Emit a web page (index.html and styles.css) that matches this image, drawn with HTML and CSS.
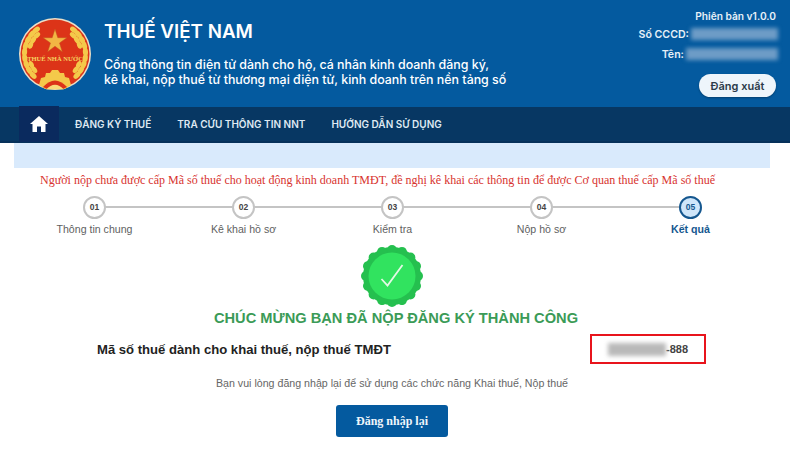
FILE: index.html
```html
<!DOCTYPE html>
<html lang="vi">
<head>
    <meta charset="UTF-8">
    <meta name="viewport" content="width=device-width, initial-scale=1.0">
    <title>Thuế Việt Nam</title>
    <link rel="stylesheet" href="styles.css">
</head>
<body>
    <!-- Header -->
    <header class="header">
        <svg class="emblem" width="72" height="72" viewBox="0 0 72 72">
            <circle cx="36" cy="36" r="36" fill="#eadfc8"/>
            <circle cx="36" cy="36" r="34.500" fill="#dc3418"/>
            <g id="wreath" fill="#f4c94a">
                <ellipse cx="36" cy="5.500" rx="4.200" ry="2.600" transform="rotate(38 36 36)"/>
                <ellipse cx="36" cy="5.500" rx="4.200" ry="2.600" transform="rotate(50 36 36)"/>
                <ellipse cx="36" cy="5.500" rx="4.200" ry="2.600" transform="rotate(62 36 36)"/>
                <ellipse cx="36" cy="5.500" rx="4.200" ry="2.600" transform="rotate(74 36 36)"/>
                <ellipse cx="36" cy="5.500" rx="4.200" ry="2.600" transform="rotate(86 36 36)"/>
                <ellipse cx="36" cy="5.500" rx="4.200" ry="2.600" transform="rotate(98 36 36)"/>
                <ellipse cx="36" cy="5.500" rx="4.200" ry="2.600" transform="rotate(110 36 36)"/>
                <ellipse cx="36" cy="5.500" rx="4.200" ry="2.600" transform="rotate(122 36 36)"/>
                <ellipse cx="36" cy="5.500" rx="4.200" ry="2.600" transform="rotate(134 36 36)"/>
                <ellipse cx="36" cy="10" rx="3.800" ry="2.400" transform="rotate(44 36 36)"/>
                <ellipse cx="36" cy="10" rx="3.800" ry="2.400" transform="rotate(57 36 36)"/>
                <ellipse cx="36" cy="10" rx="3.800" ry="2.400" transform="rotate(70 36 36)"/>
                <ellipse cx="36" cy="10" rx="3.800" ry="2.400" transform="rotate(114 36 36)"/>
                <ellipse cx="36" cy="10" rx="3.800" ry="2.400" transform="rotate(127 36 36)"/>
            </g>
            <use href="#wreath" transform="translate(72 0) scale(-1 1)"/>
            <path d="M20 67 L22 60 L26 59 L27 55 L31 55 L33 52 H39 L41 55 L45 55 L46 59 L50 60 L52 67 L46 71 H26 Z" fill="#f4c94a"/>
            <path d="M24 69 Q36 56 48 69 L44 71 H28 Z" fill="#dc3418"/>
            <path d="M27 71.500 Q36 62 45 71.500 Z" fill="#f9dc7a"/>
            <polygon points="36,11 38.800,19.700 47.900,19.700 40.500,25 43.300,33.700 36,28.300 28.700,33.700 31.500,25 24.100,19.700 33.200,19.700" fill="#f2b644" stroke="#c2501e" stroke-width=".5"/>
            <text x="36" y="42.500" class="emblem-text" text-anchor="middle">THUẾ NHÀ NƯỚC</text>
        </svg>
        <div class="brand">
            <h1>THUẾ VIỆT NAM</h1>
            <p>Cổng thông tin điện tử dành cho hộ, cá nhân kinh doanh đăng ký,<br>kê khai, nộp thuế từ thương mại điện tử, kinh doanh trên nền tảng số</p>
        </div>
        <div class="account">
            <div class="version">Phiên bản v1.0.0</div>
            <div class="account-row">Số CCCD: <span class="blur-light cccd"></span></div>
            <div class="account-row">Tên: <span class="blur-light name"></span></div>
            <button type="button" class="logout">Đăng xuất</button>
        </div>
    </header>

    <!-- Menu -->
    <nav class="nav">
        <a class="nav-home" href="#">
            <svg width="18" height="16" viewBox="0 0 18 16"><path d="M9 0 L18 8 L15.5 8 L15.5 16 L11 16 L11 10.5 L7 10.5 L7 16 L2.5 16 L2.5 8 L0 8 Z" fill="#fff"/></svg>
        </a>
        <a href="#">ĐĂNG KÝ THUẾ</a>
        <a href="#">TRA CỨU THÔNG TIN NNT</a>
        <a href="#">HƯỚNG DẪN SỬ DỤNG</a>
    </nav>

    <main class="panel">
        <div class="panel-band"></div>
        <p class="notice">Người nộp chưa được cấp Mã số thuế cho hoạt động kinh doanh TMĐT, đề nghị kê khai các thông tin để được Cơ quan thuế cấp Mã số thuế</p>

        <ol class="steps">
            <li class="step"><span class="step-num">01</span>Thông tin chung</li>
            <li class="step"><span class="step-num">02</span>Kê khai hồ sơ</li>
            <li class="step"><span class="step-num">03</span>Kiểm tra</li>
            <li class="step"><span class="step-num">04</span>Nộp hồ sơ</li>
            <li class="step active"><span class="step-num">05</span>Kết quả</li>
        </ol>

        <svg class="seal" width="64" height="64" viewBox="0 0 64 64">
            <g fill="#25c04f">
                <circle cx="32" cy="32" r="29"/>
                <circle cx="32" cy="6" r="5"/>
                <circle cx="32" cy="6" r="5" transform="rotate(22.5 32 32)"/>
                <circle cx="32" cy="6" r="5" transform="rotate(45 32 32)"/>
                <circle cx="32" cy="6" r="5" transform="rotate(67.5 32 32)"/>
                <circle cx="32" cy="6" r="5" transform="rotate(90 32 32)"/>
                <circle cx="32" cy="6" r="5" transform="rotate(112.5 32 32)"/>
                <circle cx="32" cy="6" r="5" transform="rotate(135 32 32)"/>
                <circle cx="32" cy="6" r="5" transform="rotate(157.5 32 32)"/>
                <circle cx="32" cy="6" r="5" transform="rotate(180 32 32)"/>
                <circle cx="32" cy="6" r="5" transform="rotate(202.5 32 32)"/>
                <circle cx="32" cy="6" r="5" transform="rotate(225 32 32)"/>
                <circle cx="32" cy="6" r="5" transform="rotate(247.5 32 32)"/>
                <circle cx="32" cy="6" r="5" transform="rotate(270 32 32)"/>
                <circle cx="32" cy="6" r="5" transform="rotate(292.5 32 32)"/>
                <circle cx="32" cy="6" r="5" transform="rotate(315 32 32)"/>
                <circle cx="32" cy="6" r="5" transform="rotate(337.5 32 32)"/>
            </g>
            <circle cx="32" cy="32" r="23.500" fill="#31e35f"/>
            <path d="M21.500 35 L27.500 41.500 L42.500 21" fill="none" stroke="#e4f8e6" stroke-width="1.800"/>
        </svg>

        <h2 class="success">CHÚC MỪNG BẠN ĐÃ NỘP ĐĂNG KÝ THÀNH CÔNG</h2>

        <div class="tax-row">
            <strong>Mã số thuế dành cho khai thuế, nộp thuế TMĐT</strong>
            <div class="tax-box"><span class="blur-grey"></span>-888</div>
        </div>

        <p class="hint">Bạn vui lòng đăng nhập lại để sử dụng các chức năng Khai thuế, Nộp thuế</p>
        <button type="button" class="relogin">Đăng nhập lại</button>
    </main>
</body>
</html>
```

FILE: styles.css
```css
* { box-sizing: border-box; }
html, body { height: 100%; }
body {
    margin: 0;
    background: #fff;
    font-family: Inter, "Noto Sans", sans-serif;
    overflow: hidden;
}

/* Header */
.header {
    height: 107px;
    background: #045a9f;
    color: #fff;
    display: flex;
    padding: 18px 14px 0 19px;
}
.emblem { flex: none; margin-right: 13px; }
.emblem-text {
    font-family: "Liberation Serif", serif;
    font-size: 6.5px;
    font-weight: 700;
    fill: #f6d560;
}
.brand { flex: 1; }
.brand h1 {
    margin: 1px 0 12px;
    font-size: 18.8px;
    line-height: 26px;
    font-weight: 600;
}
.brand p {
    margin: 0;
    font-size: 12.4px;
    line-height: 15px;
    font-weight: 500;
}
.account {
    display: flex;
    flex-direction: column;
    align-items: flex-end;
    margin-top: -10px;
    font-size: 10.2px;
    font-weight: 600;
    color: #e6f0f8;
}
.version { line-height: 14px; margin-top: 1px; white-space: nowrap; }
.account-row {
    display: flex;
    align-items: center;
    gap: 2px;
    height: 20px;
    margin-top: 1px;
    margin-right: -2px;
    font-size: 10.6px;
    white-space: nowrap;
}
.account-row + .account-row { margin-top: 0; }
.blur-light {
    display: block;
    height: 12px;
    background: #6d9cc6;
    filter: blur(2px);
}
.cccd { width: 87px; }
.name { width: 92px; }
.logout {
    width: 77px;
    height: 23px;
    margin-top: 10px;
    border: none;
    border-radius: 12px;
    background: #eef5fb;
    color: #2b3a4a;
    font-family: inherit;
    font-size: 11px;
    font-weight: 600;
    box-shadow: 0 1px 2px rgba(0, 0, 0, 0.3);
}

/* Menu */
.nav {
    height: 36px;
    background: #073763;
    border-bottom: 2px solid #06315a;
    display: flex;
    align-items: center;
    padding-left: 19px;
    gap: 26px;
}
.nav a {
    color: #dfe9f2;
    text-decoration: none;
    font-size: 10px;
    font-weight: 600;
}
.nav-home {
    width: 40px;
    height: 36px;
    margin-right: -10px;
    background: #0a2a5e;
    display: flex;
    align-items: center;
    justify-content: center;
}

/* Panel */
.panel {
    margin: 0 20px 0 14px;
    display: flex;
    flex-direction: column;
    align-items: center;
    background: #fff;
}
.panel-band {
    align-self: stretch;
    height: 25px;
    background: #d9eafc;
}
.notice {
    align-self: flex-start;
    margin: 4px 0 0 26px;
    font-family: "Liberation Serif", serif;
    font-size: 12.03px;
    line-height: 16px;
    color: #d8332e;
    white-space: nowrap;
}

/* Steps */
.steps {
    list-style: none;
    margin: 8px 0 0;
    padding: 0;
    align-self: flex-start;
    margin-left: 6px;
    display: grid;
    grid-template-columns: repeat(5, 149px);
}
.step {
    position: relative;
    display: flex;
    flex-direction: column;
    align-items: center;
    font-family: "Liberation Sans", sans-serif;
    font-size: 10.6px;
    line-height: 14px;
    color: #5f5f5f;
}
.step::after {
    content: "";
    position: absolute;
    top: 10px;
    left: 50%;
    width: 149px;
    height: 2px;
    background: #c4c4c4;
}
.step:last-child::after { display: none; }
.step-num {
    position: relative;
    z-index: 1;
    width: 23px;
    height: 23px;
    margin-bottom: 3px;
    border: 2px solid #c4c4c4;
    border-radius: 50%;
    background: #fff;
    color: #444;
    font-size: 8.5px;
    font-weight: 700;
    line-height: 19px;
    text-align: center;
}
.step.active { color: #15578f; font-weight: 700; }
.step.active .step-num {
    border-color: #15578f;
    background: #cfe6fa;
    color: #15578f;
}

/* Result */
.seal { margin: 8px 0 0; }
.success {
    margin: 1px 0 0 8px;
    font-family: "Liberation Sans", sans-serif;
    font-size: 14.65px;
    line-height: 18px;
    font-weight: 700;
    color: #3b9b57;
}
.tax-row {
    align-self: stretch;
    display: flex;
    align-items: center;
    justify-content: space-between;
    margin-top: 7px;
    padding: 0 64px 0 83px;
    font-family: "Liberation Sans", sans-serif;
    color: #222;
}
.tax-row strong { font-size: 13.1px; }
.tax-box {
    width: 116px;
    height: 30px;
    border: 2px solid #e8141c;
    display: flex;
    align-items: center;
    justify-content: center;
    font-size: 11px;
    font-weight: 700;
    color: #444;
}
.blur-grey {
    display: block;
    width: 58px;
    height: 13px;
    background: #b9b9b9;
    filter: blur(2px);
}
.hint {
    margin: 12px 0 0;
    font-family: "Liberation Sans", sans-serif;
    font-size: 10.65px;
    line-height: 14px;
    color: #666;
}
.relogin {
    width: 112px;
    height: 32px;
    margin: 15px 0 0;
    border: none;
    border-radius: 3px;
    background: #045a9f;
    color: #eef5fb;
    font-family: "Liberation Serif", serif;
    font-size: 12px;
    font-weight: 700;
}
```
